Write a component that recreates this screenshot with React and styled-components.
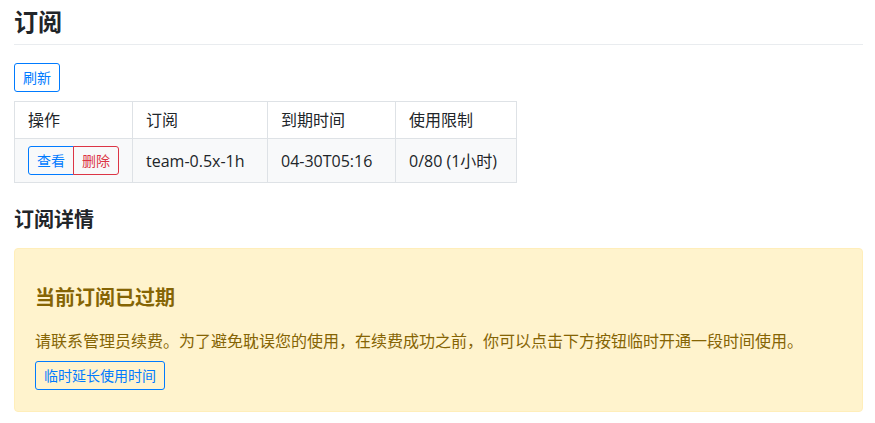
import React from 'react';
import styled, { createGlobalStyle } from 'styled-components';

const GlobalStyle = createGlobalStyle`
  body {
    margin: 0;
    background: #fff;
    color: #212529;
    font-family: "Open Sans", "Noto Sans CJK SC", sans-serif;
    font-size: 16px;
    line-height: 1.5;
  }
`;

// 页面容器
const Page = styled.div`
  padding: 0 12px 0 14px;
`;

const Title = styled.h1`
  margin: 7px 0 0;
  padding-bottom: 8px;
  font-size: 24px;
  line-height: 29px;
  font-weight: 700;
  border-bottom: 1px solid #e9ecef;
`;

const Button = styled.button`
  display: inline-block;
  font-family: inherit;
  font-size: 14px;
  line-height: 21px;
  padding: 3px 8px;
  background: transparent;
  border: 1px solid ${p => (p.danger ? '#dc3545' : '#007bff')};
  color: ${p => (p.danger ? '#dc3545' : '#007bff')};
  border-radius: 3px;
  cursor: pointer;
`;

const Toolbar = styled.div`
  margin-top: 18px;
`;

const Table = styled.table`
  margin-top: 9px;
  border-collapse: collapse;
  font-size: 16px;
`;

const Th = styled.th`
  text-align: left;
  font-weight: 400;
  padding: 6px 13px;
  line-height: 24px;
  border: 1px solid #dee2e6;
  width: ${p => p.w}px;
  box-sizing: border-box;
`;

const Td = styled.td`
  padding: 7px 13px;
  line-height: 24px;
  border: 1px solid #dee2e6;
  background: #f8f9fa;
  white-space: nowrap;
`;

const Group = styled.div`
  display: inline-flex;

  & > button:first-child {
    border-top-right-radius: 0;
    border-bottom-right-radius: 0;
  }
  & > button:last-child {
    border-top-left-radius: 0;
    border-bottom-left-radius: 0;
    margin-left: -1px;
  }
`;

const SubTitle = styled.h2`
  margin: 25px 0 0;
  font-size: 20px;
  line-height: 24px;
  font-weight: 700;
`;

const Alert = styled.div`
  margin-top: 16px;
  padding: 12px 20px 21px;
  background: #fff3cd;
  border: 1px solid #ffeeba;
  border-radius: 4px;
  color: #856404;
`;

const AlertHeading = styled.h4`
  margin: 25px 0 0;
  font-size: 20px;
  line-height: 24px;
  font-weight: 700;
`;

const AlertText = styled.p`
  margin: 19px 0 8px;
  line-height: 24px;
`;

const rows = [
  { name: 'team-0.5x-1h', expire: '04-30T05:16', limit: '0/80 (1小时)' },
];

export default function App() {
  return (
    <Page>
      <GlobalStyle />
      <Title>订阅</Title>
      <Toolbar>
        <Button>刷新</Button>
      </Toolbar>
      <Table>
        <thead>
          <tr>
            <Th w={118}>操作</Th>
            <Th w={135}>订阅</Th>
            <Th w={128}>到期时间</Th>
            <Th w={121}>使用限制</Th>
          </tr>
        </thead>
        <tbody>
          {rows.map(r => (
            <tr key={r.name}>
              <Td>
                <Group>
                  <Button>查看</Button>
                  <Button danger>删除</Button>
                </Group>
              </Td>
              <Td>{r.name}</Td>
              <Td>{r.expire}</Td>
              <Td>{r.limit}</Td>
            </tr>
          ))}
        </tbody>
      </Table>
      <SubTitle>订阅详情</SubTitle>
      <Alert>
        <AlertHeading>当前订阅已过期</AlertHeading>
        <AlertText>
          请联系管理员续费。为了避免耽误您的使用，在续费成功之前，你可以点击下方按钮临时开通一段时间使用。
        </AlertText>
        <Button>临时延长使用时间</Button>
      </Alert>
    </Page>
  );
}
